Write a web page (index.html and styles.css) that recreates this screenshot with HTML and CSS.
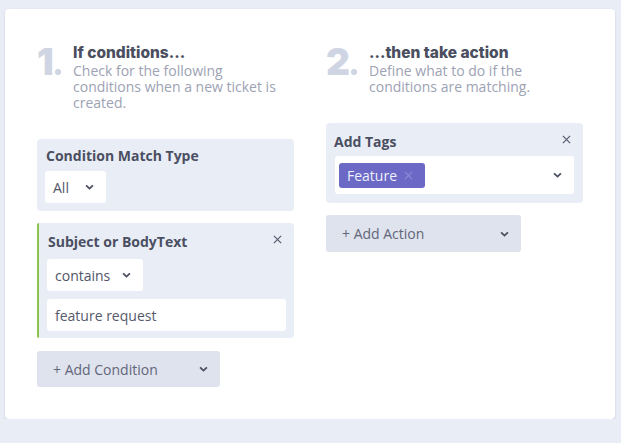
FILE: index.html
```html
<!DOCTYPE html>
<html>
<head>
<meta charset="utf-8">
<link rel="stylesheet" href="styles.css">
</head>
<body>
<div class="card">
  <div class="col">
    <div class="step">
      <div class="num num-1">1<span class="dot"></span></div>
      <div class="step-text">
        <div class="step-title">If conditions...</div>
        <div class="step-sub">Check for the following conditions when a new ticket is created.</div>
      </div>
    </div>
    <div class="box box-match">
      <div class="box-title">Condition Match Type</div>
      <div class="select sel-all"><span>All</span><svg class="chev" viewBox="0 0 10 6"><path d="M1.2 1.2 L5 4.8 L8.8 1.2"/></svg></div>
    </div>
    <div class="box box-cond">
      <div class="box-title">Subject or BodyText</div>
      <svg class="close" viewBox="0 0 10 10"><path d="M1 1 L9 9 M9 1 L1 9"/></svg>
      <div class="select sel-contains"><span>contains</span><svg class="chev" viewBox="0 0 10 6"><path d="M1.2 1.2 L5 4.8 L8.8 1.2"/></svg></div>
      <div class="input">feature request</div>
    </div>
    <div class="btn btn-cond"><span>+ Add Condition</span><svg class="chev" viewBox="0 0 10 6"><path d="M1.2 1.2 L5 4.8 L8.8 1.2"/></svg></div>
  </div>
  <div class="col">
    <div class="step">
      <div class="num num-2">2<span class="dot"></span></div>
      <div class="step-text">
        <div class="step-title">...then take action</div>
        <div class="step-sub">Define what to do if the conditions are matching.</div>
      </div>
    </div>
    <div class="box box-tags">
      <div class="box-title">Add Tags</div>
      <svg class="close" viewBox="0 0 10 10"><path d="M1 1 L9 9 M9 1 L1 9"/></svg>
      <div class="tag-select">
        <div class="chip"><span>Feature</span><svg class="chip-x" viewBox="0 0 10 10"><path d="M1 1 L9 9 M9 1 L1 9"/></svg></div>
        <svg class="chev" viewBox="0 0 10 6"><path d="M1.2 1.2 L5 4.8 L8.8 1.2"/></svg>
      </div>
    </div>
    <div class="btn btn-action"><span>+ Add Action</span><svg class="chev" viewBox="0 0 10 6"><path d="M1.2 1.2 L5 4.8 L8.8 1.2"/></svg></div>
  </div>
</div>
</body>
</html>
```
FILE: styles.css
```css
html, body {
  margin: 0;
  padding: 0;
  background: #e9edf6;
}
body {
  padding: 9px 6px 0 5px;
  font-family: "Open Sans", "Liberation Sans", sans-serif;
}
.card {
  background: #fff;
  border-radius: 4px;
  box-shadow: 0 1px 2px rgba(60, 70, 100, 0.22);
  padding: 34px 32px 32px 32px;
  display: flex;
  gap: 32px;
  height: 344px;
}
.col {
  width: 257px;
  display: flex;
  flex-direction: column;
  align-items: flex-start;
}
.step {
  display: flex;
  margin-bottom: 28px;
}
.num {
  flex: none;
  font-family: Inter, "Liberation Sans", sans-serif;
  font-weight: 900;
  font-size: 37px;
  line-height: 37px;
  color: #d0d5e3;
  letter-spacing: -1px;
}
.num-1 { width: 36px; }
.num-2 { width: 43px; }
.dot {
  display: inline-block;
  width: 6px;
  height: 6px;
  border-radius: 50%;
  background: #d0d5e3;
  margin-left: 2px;
}
.step-text {
  width: 210px;
}
.step-title {
  font-family: Inter, "Liberation Sans", sans-serif;
  font-weight: 800;
  font-size: 15.5px;
  line-height: 20px;
  color: #4a4e5f;
}
.step-sub {
  font-size: 14px;
  line-height: 16px;
  color: #9da2b4;
}
.box {
  background: #e9edf6;
  border-radius: 4px;
  width: 100%;
  box-sizing: border-box;
  position: relative;
}
.box-title {
  font-weight: 700;
  font-size: 14px;
  line-height: 18px;
  color: #4b4f62;
}
.box-match {
  padding: 8px;
  margin-bottom: 12px;
}
.box-match .box-title {
  margin-bottom: 6px;
  padding-left: 1px;
}
.box-cond {
  border-left: 2px solid #8cc54c;
  border-radius: 2px 4px 4px 2px;
  padding: 10px 8px 7px 8px;
  margin-bottom: 13px;
}
.box-cond .box-title {
  margin-bottom: 8px;
  padding-left: 1px;
}
.box-tags {
  padding: 10px 9px 9px 9px;
  margin-bottom: 12px;
}
.box-tags .box-title {
  margin-bottom: 5px;
  margin-left: -1px;
}
.close {
  position: absolute;
  top: 12px;
  right: 12px;
  width: 9px;
  height: 9px;
  fill: none;
  stroke: #5a5e70;
  stroke-width: 1.4;
}
.select {
  background: #fff;
  border-radius: 3px;
  height: 32px;
  box-sizing: border-box;
  display: flex;
  align-items: center;
  justify-content: space-between;
  padding: 0 12px 0 8px;
  font-size: 14px;
  color: #515568;
}
.sel-all { width: 61px; }
.sel-contains { width: 96px; margin-bottom: 8px; }
.chev {
  width: 9px;
  height: 6px;
  fill: none;
  stroke: #4a4e5f;
  stroke-width: 2;
  flex: none;
}
.input {
  background: #fff;
  border-radius: 3px;
  height: 32px;
  box-sizing: border-box;
  display: flex;
  align-items: center;
  padding: 0 8px;
  font-size: 14px;
  color: #555a6c;
}
.tag-select {
  background: #fff;
  border-radius: 3px;
  height: 38px;
  box-sizing: border-box;
  display: flex;
  align-items: center;
  justify-content: space-between;
  padding: 0 12px 0 4px;
}
.chip {
  background: #6b68c6;
  border-radius: 3px;
  height: 25px;
  box-sizing: border-box;
  display: flex;
  align-items: center;
  padding: 0 12px 0 8px;
  gap: 7px;
  font-size: 14px;
  color: #eef0fb;
  margin-top: 1px;
}
.chip-x {
  width: 9px;
  height: 9px;
  fill: none;
  stroke: #8e8bda;
  stroke-width: 1.3;
}
.btn {
  background: #dfe3ed;
  border-radius: 3px;
  height: 36px;
  box-sizing: border-box;
  display: flex;
  align-items: center;
  justify-content: space-between;
  padding: 0 12px 0 16px;
  font-size: 14px;
  color: #62667a;
}
.btn-cond { width: 183px; }
.btn-action { width: 195px; height: 37px; }
```
